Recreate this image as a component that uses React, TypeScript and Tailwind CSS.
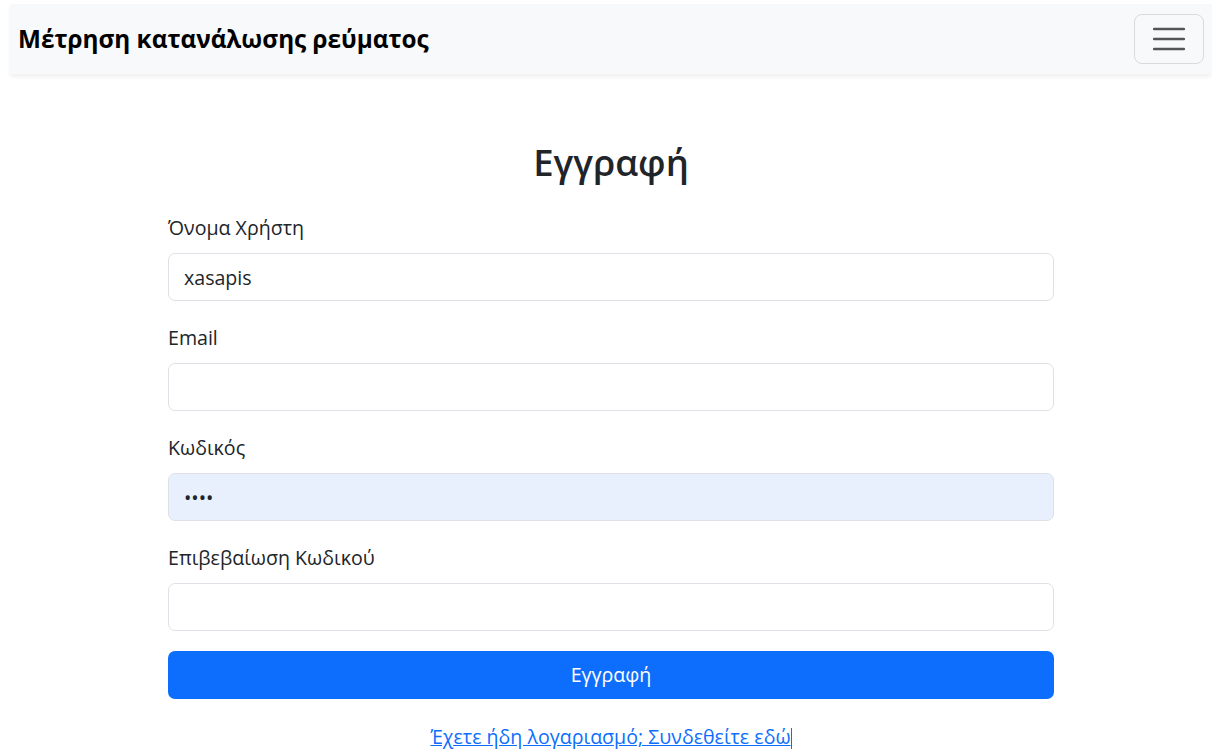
import { useState } from 'react';

const font = { fontFamily: '"Open Sans", "Noto Sans", sans-serif' };

// Bootstrap-like text field: label above, rounded bordered input
const Field = ({
  label,
  type = 'text',
  value,
  autofill = false,
}: {
  label: string;
  type?: string;
  value: string;
  autofill?: boolean;
}) => {
  const [val, setVal] = useState(value);
  return (
    <div className="mb-[22px]">
      <label className="block text-[19.6px] leading-[30px] mb-[10px] text-[#212529]">{label}</label>
      <input
        type={type}
        value={val}
        onChange={(e) => setVal(e.target.value)}
        className={`block w-full h-[48px] px-[15px] text-[19.6px] text-[#212529] rounded-[7px] border border-[#dee2e6] outline-none ${
          autofill ? 'bg-[#e8f0fe]' : 'bg-white'
        }`}
        style={font}
      />
    </div>
  );
};

export default function App() {
  return (
    <div className="min-h-screen bg-white pl-[10px] pt-[4px]" style={font}>
      {/* Top navbar */}
      <nav className="h-[70px] bg-[#f8f9fa] flex items-center justify-between pl-[8px] pr-[8px] shadow-[0_3px_4px_rgba(0,0,0,0.06)]">
        <span className="text-[24.3px] font-bold text-black">Μέτρηση κατανάλωσης ρεύματος</span>
        <button className="w-[70px] h-[50px] rounded-[8px] border border-[rgba(0,0,0,0.12)] flex items-center justify-center">
          <svg width="32" height="26" viewBox="0 0 32 26">
            <path d="M1 3h30M1 13h30M1 23h30" stroke="#555" strokeWidth="2.5" strokeLinecap="round" />
          </svg>
        </button>
      </nav>

      {/* Registration form */}
      <div className="w-[886px] mx-auto pt-[66px]">
        <h2 className="text-center text-[36.5px] leading-[44px] font-semibold text-[#212529] mb-[29px]">Εγγραφή</h2>
        <form onSubmit={(e) => e.preventDefault()}>
          <Field label="Όνομα Χρήστη" value="xasapis" />
          <Field label="Email" type="email" value="" />
          <Field label="Κωδικός" type="password" value="1234" autofill />
          <Field label="Επιβεβαίωση Κωδικού" type="password" value="" />
          <button
            type="submit"
            className="-mt-[2px] w-full h-[48px] rounded-[7px] bg-[#0d6efd] text-white text-[19.6px]"
          >
            Εγγραφή
          </button>
        </form>
        <p className="mt-[23px] text-center text-[19.6px] leading-[30px]">
          <a href="#" className="text-[#0d6efd] underline">
            Έχετε ήδη λογαριασμό; Συνδεθείτε εδώ
          </a>
          <span className="inline-block w-px h-[22px] bg-[#0d6efd] align-middle" />
        </p>
      </div>
    </div>
  );
}
